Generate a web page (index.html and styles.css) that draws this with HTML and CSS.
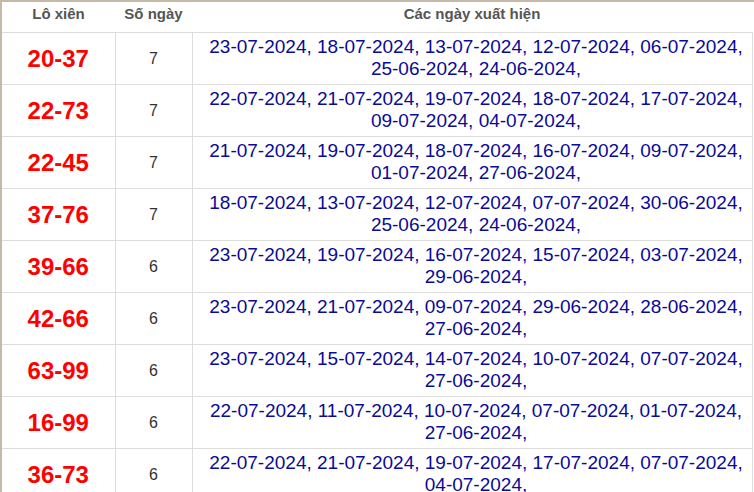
FILE: index.html
```html
<!DOCTYPE html>
<html lang="vi">
<head>
<meta charset="utf-8">
<title>Lô xiên</title>
<link rel="stylesheet" href="styles.css">
</head>
<body>
<div class="frame">
<table class="lx">
<colgroup><col class="c1"><col class="c2"><col class="c3"></colgroup>
<thead>
<tr><th>Lô xiên</th><th>Số ngày</th><th>Các ngày xuất hiện</th></tr>
</thead>
<tbody>
<tr><td class="pair">20-37</td><td class="cnt">7</td><td class="dates">23-07-2024, 18-07-2024, 13-07-2024, 12-07-2024, 06-07-2024, 25-06-2024, 24-06-2024,</td></tr>
<tr><td class="pair">22-73</td><td class="cnt">7</td><td class="dates">22-07-2024, 21-07-2024, 19-07-2024, 18-07-2024, 17-07-2024, 09-07-2024, 04-07-2024,</td></tr>
<tr><td class="pair">22-45</td><td class="cnt">7</td><td class="dates">21-07-2024, 19-07-2024, 18-07-2024, 16-07-2024, 09-07-2024, 01-07-2024, 27-06-2024,</td></tr>
<tr><td class="pair">37-76</td><td class="cnt">7</td><td class="dates">18-07-2024, 13-07-2024, 12-07-2024, 07-07-2024, 30-06-2024, 25-06-2024, 24-06-2024,</td></tr>
<tr><td class="pair">39-66</td><td class="cnt">6</td><td class="dates">23-07-2024, 19-07-2024, 16-07-2024, 15-07-2024, 03-07-2024, 29-06-2024,</td></tr>
<tr><td class="pair">42-66</td><td class="cnt">6</td><td class="dates">23-07-2024, 21-07-2024, 09-07-2024, 29-06-2024, 28-06-2024, 27-06-2024,</td></tr>
<tr><td class="pair">63-99</td><td class="cnt">6</td><td class="dates">23-07-2024, 15-07-2024, 14-07-2024, 10-07-2024, 07-07-2024, 27-06-2024,</td></tr>
<tr><td class="pair">16-99</td><td class="cnt">6</td><td class="dates">22-07-2024, 11-07-2024, 10-07-2024, 07-07-2024, 01-07-2024, 27-06-2024,</td></tr>
<tr><td class="pair">36-73</td><td class="cnt">6</td><td class="dates">22-07-2024, 21-07-2024, 19-07-2024, 17-07-2024, 07-07-2024, 04-07-2024,</td></tr>
</tbody>
</table>
</div>
</body>
</html>
```
FILE: styles.css
```css
html, body {
  margin: 0;
  padding: 0;
  background: #fff;
}
.frame {
  width: 754px;
  height: 492px;
  box-sizing: border-box;
  border-left: 2px solid #c7b9a8;
  border-top: 2px solid #c7b9a8;
  overflow: hidden;
  font-family: "Liberation Sans", Arial, sans-serif;
}
.lx {
  border-collapse: collapse;
  width: 750px;
  table-layout: fixed;
}
.c1 { width: 113px; }
.c2 { width: 77px; }
.c3 { width: 560px; }
.lx th {
  font-size: 15px;
  font-weight: bold;
  color: #555;
  text-align: center;
  padding: 3px 0 10px;
  line-height: 17px;
  border-bottom: 1px solid #ddd;
}
.lx td {
  border: 1px solid #ddd;
  height: 51px;
  box-sizing: border-box;
  text-align: center;
}
.lx tr td:first-child { border-left: none; }
.pair {
  color: #ff0000;
  font-weight: bold;
  font-size: 24px;
  vertical-align: middle;
  padding: 0;
}
.cnt {
  color: #333;
  font-size: 16px;
  vertical-align: middle;
  padding: 0;
}
.dates {
  color: #0a0a96;
  font-size: 19px;
  line-height: 22px;
  vertical-align: top;
  padding: 3px 0 4px 8px;
}
```
